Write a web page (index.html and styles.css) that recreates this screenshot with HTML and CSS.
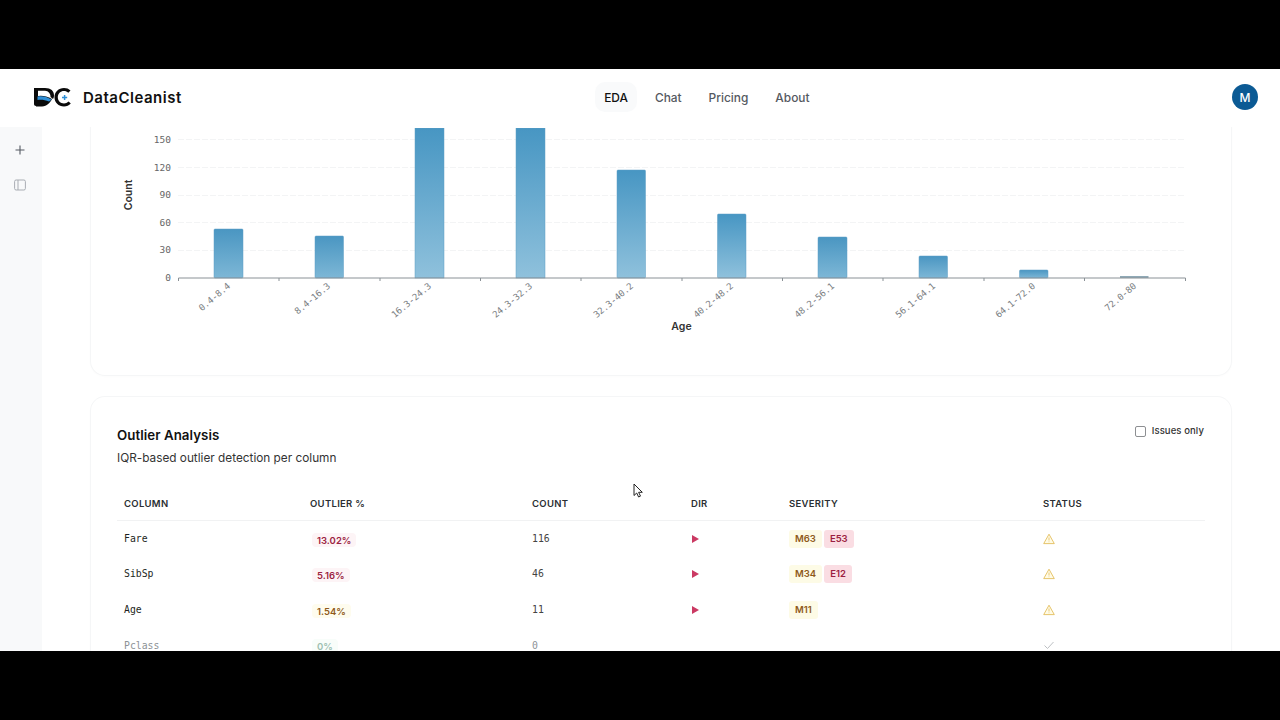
FILE: index.html
```html
<!DOCTYPE html>
<html lang="en">
<head>
<meta charset="utf-8">
<title>DataCleanist EDA</title>
<link rel="stylesheet" href="styles.css">
</head>
<body>
<div class="app">
  <header class="topbar">
    <div class="brand">
      <svg class="logo" viewBox="0 0 39 20" aria-hidden="true">
        <path d="M1 1H12C18 1 21 4 21 8.5C21 10 20.6 11 20 12L17.500 10C17.800 7 15.500 3.800 12 3.800H5V19H3C1.800 19 1 18.200 1 17Z" fill="#0a0a0a"/>
        <path d="M3 9.500C8 8 13 9 19 12C17 16 14 19 9 19.400H3Z" fill="#0a0a0a"/>
        <path d="M4.500 9.600C9 8.600 14 9.800 18.500 12.600C17.600 13.600 16.800 14.200 16 14.600C12 12.800 8 12.400 4.500 13Z" fill="#2f8fd6"/>
        <path d="M37.500 3.600C35.800 1.800 33.600 1 31 1C25.500 1 21.500 5 21.500 10.200C21.500 15.400 25.500 19.400 31 19.400C33.800 19.400 36 18.400 37.800 16.400L35.600 14.600C34.200 15.900 32.700 16.400 31 16.400C27.500 16.400 24.800 13.800 24.800 10.200C24.800 6.700 27.500 4 31 4C32.600 4 34 4.600 35.300 5.800Z" fill="#0a0a0a"/>
        <path d="M31.600 8V13M29 10.500H34.200" stroke="#2f8fd6" stroke-width="1.500"/>
      </svg>
      <span class="brand-name">DataCleanist</span>
    </div>
    <nav class="nav">
      <a class="nav-item active">EDA</a>
      <a class="nav-item">Chat</a>
      <a class="nav-item">Pricing</a>
      <a class="nav-item">About</a>
    </nav>
    <div class="avatar">M</div>
  </header>
  <div class="body-row">
    <aside class="sidebar">
      <svg class="side-icon" viewBox="0 0 12 12" aria-hidden="true"><path d="M6 1.5V10.5M1.5 6H10.5" stroke="#555b63" stroke-width="1.1" fill="none"/></svg>
      <svg class="side-icon" viewBox="0 0 12 12" aria-hidden="true"><rect x="0.6" y="1" width="10.8" height="10" rx="1.5" stroke="#a9adb3" stroke-width="1" fill="none"/><path d="M4 1V11" stroke="#a9adb3" stroke-width="1"/></svg>
    </aside>
    <main class="main">
      <section class="card chart-card">
        <svg class="chart" viewBox="91 128 1140 247" role="img" aria-label="Age histogram">
          <defs>
            <linearGradient id="barfill" x1="0" y1="0" x2="0" y2="1">
              <stop offset="0" stop-color="#4796c3"/>
              <stop offset="1" stop-color="#8fc1dc"/>
            </linearGradient>
            <linearGradient id="barshort" x1="0" y1="0" x2="0" y2="1">
              <stop offset="0" stop-color="#4a96c2"/>
              <stop offset="1" stop-color="#7db7d6"/>
            </linearGradient>
          </defs>
          <g class="grid">
            <path d="M178 139.500H1185M178 167.500H1185M178 195.500H1185M178 222.500H1185M178 250.500H1185"/>
          </g>
          <g class="ylabels">
            <text x="171" y="143">150</text>
            <text x="171" y="170.500">120</text>
            <text x="171" y="198">90</text>
            <text x="171" y="225.500">60</text>
            <text x="171" y="253">30</text>
            <text x="171" y="281">0</text>
          </g>
          <text class="axis-title" transform="translate(132 195) rotate(-90)">Count</text>
          <rect class="bar-s" x="214" y="229" width="29" height="49" rx="1"/>
          <rect class="bar-s" x="315" y="236" width="28.500" height="42" rx="1"/>
          <rect class="bar-l" x="415" y="128" width="29" height="150"/>
          <rect class="bar-l" x="516" y="128" width="29" height="150"/>
          <rect class="bar-l" x="617" y="170" width="28.500" height="108" rx="1"/>
          <rect class="bar-l" x="717.500" y="214" width="28.500" height="64" rx="1"/>
          <rect class="bar-s" x="818" y="237" width="29" height="41" rx="1"/>
          <rect class="bar-s" x="919" y="256" width="28.500" height="22" rx="1"/>
          <rect class="bar-s" x="1019.500" y="270" width="28.500" height="8" rx="1"/>
          <rect class="bar-t" x="1120" y="276" width="28.500" height="2"/>
          <path class="axis" d="M178.500 278H1185.500M178.500 278V281M279 278V281M380 278V281M480.500 278V281M581 278V281M682 278V281M782.500 278V281M883 278V281M984 278V281M1084.500 278V281M1185.500 278V281"/>
          <g class="xlabels">
            <text transform="translate(231 287) rotate(-40)">0.4-8.4</text>
            <text transform="translate(331 287) rotate(-40)">8.4-16.3</text>
            <text transform="translate(432 287) rotate(-40)">16.3-24.3</text>
            <text transform="translate(533 287) rotate(-40)">24.3-32.3</text>
            <text transform="translate(634 287) rotate(-40)">32.3-40.2</text>
            <text transform="translate(734 287) rotate(-40)">40.2-48.2</text>
            <text transform="translate(835 287) rotate(-40)">48.2-56.1</text>
            <text transform="translate(936 287) rotate(-40)">56.1-64.1</text>
            <text transform="translate(1036 287) rotate(-40)">64.1-72.0</text>
            <text transform="translate(1137 287) rotate(-40)">72.0-80</text>
          </g>
          <text class="axis-title center" x="681.500" y="330">Age</text>
        </svg>
      </section>
      <section class="card table-card">
        <div class="card-head">
          <div>
            <h2 class="card-title">Outlier Analysis</h2>
            <p class="card-sub">IQR-based outlier detection per column</p>
          </div>
          <label class="issues"><span class="checkbox"></span>Issues only</label>
        </div>
        <table class="table">
          <thead>
            <tr><th class="c1">Column</th><th class="c2">Outlier %</th><th class="c3">Count</th><th class="c4">Dir</th><th class="c5">Severity</th><th class="c6">Status</th></tr>
          </thead>
          <tbody>
            <tr>
              <td class="mono">Fare</td><td><span class="pct red">13.02%</span></td><td class="mono num">116</td>
              <td><span class="dir"></span></td>
              <td><span class="tag tag-m">M63</span><span class="tag tag-e">E53</span></td>
              <td><svg class="warn" viewBox="0 0 12 12" aria-hidden="true"><path d="M6 1.2L11.300 10.600H0.700Z" fill="#fffbe6" stroke="#e3bd5c" stroke-width="0.9" stroke-linejoin="round"/><path d="M6 4.500V7.500M6 8.500V9.200" stroke="#e3bd5c" stroke-width="0.8"/></svg></td>
            </tr>
            <tr>
              <td class="mono">SibSp</td><td><span class="pct red">5.16%</span></td><td class="mono num">46</td>
              <td><span class="dir"></span></td>
              <td><span class="tag tag-m">M34</span><span class="tag tag-e">E12</span></td>
              <td><svg class="warn" viewBox="0 0 12 12" aria-hidden="true"><path d="M6 1.2L11.300 10.600H0.700Z" fill="#fffbe6" stroke="#e3bd5c" stroke-width="0.9" stroke-linejoin="round"/><path d="M6 4.500V7.500M6 8.500V9.200" stroke="#e3bd5c" stroke-width="0.8"/></svg></td>
            </tr>
            <tr>
              <td class="mono">Age</td><td><span class="pct amber">1.54%</span></td><td class="mono num">11</td>
              <td><span class="dir"></span></td>
              <td><span class="tag tag-m">M11</span></td>
              <td><svg class="warn" viewBox="0 0 12 12" aria-hidden="true"><path d="M6 1.2L11.300 10.600H0.700Z" fill="#fffbe6" stroke="#e3bd5c" stroke-width="0.9" stroke-linejoin="round"/><path d="M6 4.500V7.500M6 8.500V9.200" stroke="#e3bd5c" stroke-width="0.8"/></svg></td>
            </tr>
            <tr class="muted">
              <td class="mono">Pclass</td><td><span class="pct green">0%</span></td><td class="mono num">0</td>
              <td></td><td></td>
              <td><svg class="warn" viewBox="0 0 12 12" aria-hidden="true"><path d="M1.500 6.500L4.500 9.500L10.500 3" fill="none" stroke="#b4b8bb" stroke-width="0.9"/></svg></td>
            </tr>
          </tbody>
        </table>
      </section>
    </main>
  </div>
  <svg class="cursor" viewBox="0 0 11 15" aria-hidden="true"><path d="M1 1V12.500L3.700 10L5.600 14L7.500 13.100L5.600 9.300H9.300Z" fill="#fff" stroke="#222" stroke-width="1"/></svg>
</div>
</body>
</html>
```

FILE: styles.css
```css
* { box-sizing: border-box; }
html, body { margin: 0; height: 100%; }
body {
  background: #000;
  padding: 69px 0;
  font-family: "Inter", "Liberation Sans", sans-serif;
  overflow: hidden;
}
.app {
  position: relative;
  height: 582px;
  background: #fff;
  display: flex;
  flex-direction: column;
  overflow: hidden;
}
.topbar {
  flex: 0 0 58px;
  display: flex;
  align-items: center;
  justify-content: space-between;
  padding: 0 22px 2px 33px;
  background: #fff;
}
.brand { display: flex; align-items: center; gap: 11px; }
.logo { width: 39px; height: 20px; display: block; }
.brand-name { font-size: 15px; font-weight: 600; color: #111; letter-spacing: 0.5px; }
.nav { display: flex; gap: 9px; }
.nav-item {
  height: 30px;
  padding: 0 9px;
  display: flex;
  align-items: center;
  border-radius: 10px;
  font-size: 11.900px;
  font-weight: 500;
  color: #55595f;
}
.nav-item.active { background: #f9fafb; color: #111; }
.avatar {
  width: 26px;
  height: 26px;
  border-radius: 50%;
  background: #0b5a94;
  color: #fff;
  font-size: 12px;
  font-weight: 500;
  display: flex;
  align-items: center;
  justify-content: center;
}
.body-row { flex: 1; display: flex; min-height: 0; }
.sidebar {
  flex: 0 0 42px;
  background: #f8f9fa;
  display: flex;
  flex-direction: column;
  align-items: center;
  gap: 23px;
  padding: 17px 2px 0 0;
}
.side-icon { width: 12px; height: 12px; display: block; }
.main { flex: 1; min-width: 0; padding: 1px 49px 0; overflow: hidden; }
.card {
  background: #fff;
  border-radius: 14px;
  box-shadow: 0 0 0 1px #f5f6f7, 0 1px 3px rgba(0, 0, 0, 0.03);
}
.chart-card { margin-top: -40px; padding-top: 40px; }
.chart { display: block; width: 1140px; height: 247px; }
.grid path { stroke: #f3f4f5; stroke-width: 1; stroke-dasharray: 6 2; fill: none; }
.ylabels text { font: 9.5px "DejaVu Sans Mono", monospace; fill: #666; text-anchor: end; }
.xlabels text { font: 9px "DejaVu Sans Mono", monospace; fill: #7a7e82; text-anchor: end; }
.axis-title { font: 600 10.500px "Inter", sans-serif; fill: #333; text-anchor: middle; }
.bar-l, .bar-s { stroke: #5f9fc4; stroke-width: 0.5; }
.bar-l { fill: url(#barfill); }
.bar-s { fill: url(#barshort); }
.bar-t { fill: #8fa9b6; }
.axis { stroke: #8a9196; stroke-width: 1; fill: none; }
.table-card { margin-top: 22px; padding: 26px 26px 0; }
.card-head { display: flex; justify-content: space-between; align-items: flex-start; padding-right: 1px; }
.card-title { margin: 2px 0 0; font-size: 13.300px; line-height: 20px; font-weight: 600; color: #111; letter-spacing: 0.05px; }
.card-sub { margin: 4px 0 0; font-size: 11.800px; line-height: 18px; color: #333; }
.issues {
  display: flex;
  align-items: center;
  gap: 6px;
  font-size: 9.500px;
  font-weight: 500;
  color: #333;
  line-height: 16px;
  letter-spacing: 0.1px;
}
.checkbox { width: 11px; height: 11px; border: 1px solid #8d8f92; border-radius: 2px; background: #fff; }
.table { width: 100%; margin-top: 19px; border-collapse: collapse; table-layout: fixed; }
.table th {
  height: 34.600px;
  padding: 0 7px;
  text-align: left;
  font-size: 9.500px;
  font-weight: 600;
  letter-spacing: 0.3px;
  text-transform: uppercase;
  color: #2b2f33;
  border-bottom: 1px solid #f1f2f3;
}
.c1 { width: 186px; }
.c2 { width: 222px; }
.c3 { width: 159px; }
.c4 { width: 98px; }
.c5 { width: 254px; }
.table td { height: 35.600px; padding: 0 7px; font-size: 10px; color: #222; vertical-align: middle; }
.table td.mono { font-family: "DejaVu Sans Mono", monospace; font-size: 9.800px; color: #1c1f22; }
.table td.num { color: #444; }
.table .muted td.mono { color: #8d9296; }
.pct {
  display: inline-block;
  padding: 1px 5px 0;
  margin: 2px 0 0 2px;
  border-radius: 4px;
  font-size: 9.500px;
  font-weight: 600;
  line-height: 13px;
}
.red { background: #fdf4f6; color: #9c1f42; }
.amber { background: #fefcee; color: #8f5a1a; }
.green { background: #f8fdfa; color: #9dbfb1; }
.dir {
  display: block;
  width: 0;
  height: 0;
  margin-left: 1px;
  border-left: 7px solid #cb3a63;
  border-top: 4px solid transparent;
  border-bottom: 4px solid transparent;
}
.tag {
  display: inline-block;
  padding: 0 6px;
  line-height: 18px;
  border-radius: 3px;
  font-size: 9.500px;
  font-weight: 600;
  margin-right: 2px;
}
.tag-m { background: #fdfbe6; color: #8f5a1a; }
.tag-e { background: #fadde3; color: #9c1f42; }
.warn { display: block; width: 12px; height: 12px; }
.cursor { position: absolute; left: 633px; top: 414px; width: 11px; height: 15px; }
```
